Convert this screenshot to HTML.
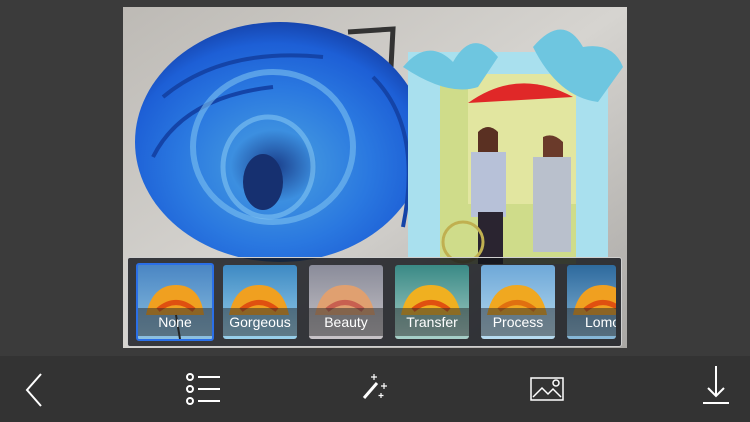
<!DOCTYPE html>
<html><head><meta charset="utf-8"><style>
body{margin:0;width:750px;height:422px;background:#3b3b3b;overflow:hidden;position:relative;font-family:"Liberation Sans",sans-serif}
.tb{position:absolute;left:0;top:356px;width:750px;height:66px;background:#333}
.strip{position:absolute;left:127px;top:257px;width:493px;height:88px;border:1px solid #cfcfcf;border-radius:3px;background:rgba(20,22,28,.82);overflow:hidden}
.th{position:absolute;top:7px;width:74px;height:74px;border-radius:3px;overflow:hidden}
.th svg{position:absolute;left:0;top:0}
.th span{position:absolute;left:0;right:0;top:43px;height:28px;background:rgba(40,40,40,.5);color:#fff;font-size:14px;text-align:center;line-height:28px}
</style></head><body>
<svg style="position:absolute;left:123px;top:7px" width="504" height="341">
<defs>
<linearGradient id="bg" x1="0" y1="0" x2="1" y2="1"><stop offset="0" stop-color="#bdbab5"/><stop offset=".5" stop-color="#d6d4d0"/><stop offset="1" stop-color="#a9a7a4"/></linearGradient>
<radialGradient id="rose" cx=".48" cy=".6" r=".6"><stop offset="0" stop-color="#1a3e8a"/><stop offset=".25" stop-color="#3c8fe0"/><stop offset=".55" stop-color="#2a78e0"/><stop offset=".85" stop-color="#1d5fd6"/><stop offset="1" stop-color="#1646b0"/></radialGradient>
</defs>
<rect width="504" height="341" fill="url(#bg)"/>
<path d="M225 25 L270 22 L268 60" stroke="#333" stroke-width="5" fill="none"/>
<ellipse cx="157" cy="135" rx="145" ry="120" fill="url(#rose)"/>
<path d="M40 90 Q100 40 200 50 M30 150 Q60 90 150 80 M250 70 Q300 120 280 220" stroke="#1444a8" stroke-width="4" fill="none"/>
<ellipse cx="150" cy="140" rx="80" ry="75" fill="none" stroke="#7cc0f0" stroke-width="6" opacity=".6"/>
<ellipse cx="145" cy="160" rx="45" ry="50" fill="none" stroke="#8fd0f5" stroke-width="5" opacity=".5"/>
<ellipse cx="140" cy="175" rx="20" ry="28" fill="#163070"/>
<rect x="285" y="45" width="200" height="205" fill="#a9e0ee"/>
<rect x="317" y="67" width="136" height="190" fill="#cfdc8a"/>
<rect x="345" y="67" width="108" height="130" fill="#e2e6a0"/>
<path d="M345 96 Q395 60 450 90 Z" fill="#e02828"/>
<path d="M355 125 q10 -10 20 0 l0 20 q-10 10 -20 0z" fill="#5a3022"/>
<rect x="348" y="145" width="35" height="65" fill="#b7c1d8"/>
<rect x="355" y="205" width="25" height="52" fill="#2a2430"/>
<path d="M420 130 q10 -5 20 5 l0 20 -20 0z" fill="#6a3a2a"/>
<rect x="410" y="150" width="38" height="95" fill="#b9c0cc"/>
<circle cx="340" cy="235" r="20" fill="none" stroke="#c0b050" stroke-width="3"/>
<path d="M280 60 q25 -30 50 -5 q20 -35 45 -5 l-20 30 q-30 10 -75 -20z" fill="#6ec6e0"/>
<path d="M410 40 q30 -35 50 0 q30 -5 40 20 l-25 35 q-40 -5 -65 -55z" fill="#6ec6e0"/>
</svg>
<div class="strip">
<div class="th" style="left:8px;border:2px solid #2a6fe8;width:74px;height:74px;top:5px;background:linear-gradient(#4a86c4,#8cc0e0)"><svg width="74" height="74"><path d="M8 50 Q14 20 38 20 Q62 20 66 50Z" fill="#f0a020"/><path d="M20 45 Q38 30 56 45" stroke="#e05010" stroke-width="5" fill="none"/><path d="M38 50 L42 74" stroke="#222" stroke-width="2"/></svg><span>None</span></div>
<div class="th" style="left:95px;background:linear-gradient(#3e8ac4,#9ad0ea)"><svg width="74" height="74"><path d="M6 50 Q12 20 36 20 Q60 20 66 50Z" fill="#f0a020"/><path d="M18 45 Q36 30 54 45" stroke="#e05010" stroke-width="5" fill="none"/></svg><span>Gorgeous</span></div>
<div class="th" style="left:181px;background:linear-gradient(#8a8c9a,#c8c4c8)"><svg width="74" height="74"><path d="M6 50 Q12 20 36 20 Q60 20 66 50Z" fill="#e0a070"/><path d="M18 45 Q36 30 54 45" stroke="#c86050" stroke-width="5" fill="none"/></svg><span>Beauty</span></div>
<div class="th" style="left:267px;background:linear-gradient(#3a8a86,#a8cfc8)"><svg width="74" height="74"><path d="M6 50 Q12 20 36 20 Q60 20 66 50Z" fill="#f0b020"/><path d="M18 45 Q36 30 54 45" stroke="#e05010" stroke-width="5" fill="none"/></svg><span>Transfer</span></div>
<div class="th" style="left:353px;background:linear-gradient(#6ea8d8,#b8dcf0)"><svg width="74" height="74"><path d="M6 50 Q12 20 36 20 Q60 20 66 50Z" fill="#f0a820"/><path d="M18 45 Q36 30 54 45" stroke="#e07010" stroke-width="5" fill="none"/></svg><span>Process</span></div>
<div class="th" style="left:439px;width:49px;background:linear-gradient(#2e6a9e,#88b8d8)"><svg width="74" height="74"><path d="M6 50 Q12 20 36 20 Q60 20 66 50Z" fill="#f0a020"/><path d="M18 45 Q36 30 54 45" stroke="#e05010" stroke-width="5" fill="none"/></svg><span style="text-align:left;padding-left:18px">Lomo</span></div>
</div>
<div class="tb"></div>
<svg style="position:absolute;left:0;top:356px" width="750" height="66" fill="none" stroke="#fff" stroke-width="2">
<path d="M41 18 L27 34 L41 50"/>
<circle cx="190" cy="21" r="3"/><circle cx="190" cy="33" r="3"/><circle cx="190" cy="45" r="3"/>
<path d="M198 21h22M198 33h22M198 45h22"/>
<path d="M364 42 L377 27" stroke-width="3"/>
<path d="M374 18v6M371 21h6M384 27v6M381 30h6M381 37v5M378.5 39.5h5" stroke-width="1.2"/>
<rect x="531" y="22" width="32" height="22" stroke-width="1.5"/>
<path d="M533 41 L542 32 L548 38 L553 33 L561 41" stroke-width="1.5"/><circle cx="556" cy="27" r="3" stroke-width="1.5"/>
<path d="M716 10v30M708 32l8 8 8-8M703 47h26"/>
</svg>
</body></html>
